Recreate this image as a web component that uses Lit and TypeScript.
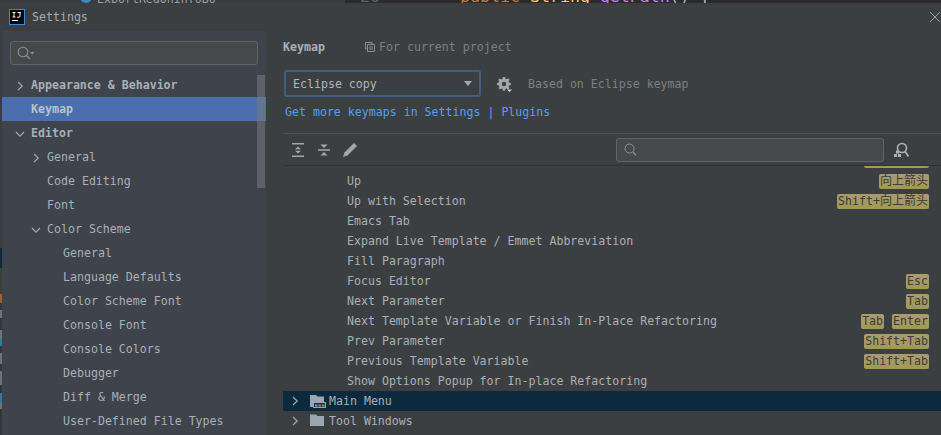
import { LitElement, html, css, svg } from "lit";
import { customElement } from "lit/decorators.js";

const chevronRight = svg`<svg width="10" height="10" viewBox="0 0 10 10"><path d="M3 1l4.2 4L3 9" fill="none" stroke="#a4a7aa" stroke-width="1.2"/></svg>`;
const chevronDown = svg`<svg width="10" height="10" viewBox="0 0 10 10"><path d="M1 3l4 4.2L9 3" fill="none" stroke="#a4a7aa" stroke-width="1.2"/></svg>`;

const navItems = [
  { label: "Appearance & Behavior", depth: 0, bold: true, arrow: "right" },
  { label: "Keymap", depth: 0, bold: true, selected: true },
  { label: "Editor", depth: 0, bold: true, arrow: "down" },
  { label: "General", depth: 1, arrow: "right" },
  { label: "Code Editing", depth: 1 },
  { label: "Font", depth: 1 },
  { label: "Color Scheme", depth: 1, arrow: "down" },
  { label: "General", depth: 2 },
  { label: "Language Defaults", depth: 2 },
  { label: "Color Scheme Font", depth: 2 },
  { label: "Console Font", depth: 2 },
  { label: "Console Colors", depth: 2 },
  { label: "Debugger", depth: 2 },
  { label: "Diff & Merge", depth: 2 },
  { label: "User-Defined File Types", depth: 2 },
];

const actions: { label: string; keys?: string[] }[] = [
  { label: "Up", keys: ["向上箭头"] },
  { label: "Up with Selection", keys: ["Shift+向上箭头"] },
  { label: "Emacs Tab" },
  { label: "Expand Live Template / Emmet Abbreviation" },
  { label: "Fill Paragraph" },
  { label: "Focus Editor", keys: ["Esc"] },
  { label: "Next Parameter", keys: ["Tab"] },
  { label: "Next Template Variable or Finish In-Place Refactoring", keys: ["Tab", "Enter"] },
  { label: "Prev Parameter", keys: ["Shift+Tab"] },
  { label: "Previous Template Variable", keys: ["Shift+Tab"] },
  { label: "Show Options Popup for In-place Refactoring" },
];

@customElement("app-root")
export class AppRoot extends LitElement {
  static styles = css`
    :host {
      display: block;
      width: 941px;
      height: 435px;
      overflow: hidden;
      background: #3c3f41;
      font-family: "DejaVu Sans Mono", "Noto Sans CJK SC", monospace;
      font-size: 11.6px;
      color: #a9b0b6;
    }
    .backdrop {
      height: 3px;
      overflow: hidden;
      display: flex;
      white-space: pre;
    }
    .tabs {
      width: 345px;
      background: #393b3d;
      display: flex;
      padding-left: 80px;
      box-sizing: border-box;
      gap: 5px;
      line-height: 16px;
      color: #9aa0a4;
    }
    .tab-icon {
      width: 12px;
      height: 12px;
      flex: none;
      margin-top: -9px;
      border-radius: 50%;
      background: #3d87c0;
    }
    .tab-name {
      margin-top: -9px;
    }
    .editor {
      flex: 1;
      background: #2b2b2b;
      font-size: 16.6px;
      line-height: 20px;
      display: flex;
    }
    .editor span {
      margin-top: -13px;
    }
    .gutter {
      width: 115px;
      color: #606366;
      padding-left: 5px;
      box-sizing: border-box;
    }
    .kw {
      color: #cc7832;
    }
    .type {
      color: #ffc66d;
    }
    .fn {
      color: #c77dff;
    }
    .plain {
      color: #a9b7c6;
    }
    .titlebar {
      height: 28px;
      display: flex;
      align-items: center;
      padding-left: 9px;
      gap: 7px;
      position: relative;
      color: #a4abb0;
    }
    .logo {
      width: 16px;
      height: 16px;
      box-sizing: border-box;
      background: #000;
      border: 1px solid #2f8fe8;
      display: block;
    }
    .close {
      position: absolute;
      right: 1px;
      top: 9px;
    }
    .body {
      display: flex;
      height: 404px;
    }
    .edge {
      width: 2px;
      flex: none;
      background: linear-gradient(
        #3a3d3f 0 217px,
        #3f4238 217px 217px,
        #0d293e 217px 237px,
        #3c3f38 237px 263px,
        #b5532a 263px 272px,
        #33363a 272px 279px,
        #6f7378 279px 287px,
        #33363a 287px 299px,
        #6f7378 299px 307px,
        #2e7d9a 308px 315px,
        #33363a 315px 322px,
        #6f7378 322px 333px,
        #33363a 333px 340px,
        #6f7378 340px 354px,
        #33363a 354px 362px,
        #2e7d9a 362px 372px,
        #6f7378 372px 378px,
        #33363a 378px
      );
    }
    .nav {
      width: 264px;
      flex: none;
      background: #3e434c;
      position: relative;
      padding-top: 10px;
      box-sizing: border-box;
    }
    .nav-search {
      margin: 0 8px 8px;
      height: 24px;
      box-sizing: border-box;
      background: #45494a;
      border: 1px solid #646464;
      border-radius: 3px;
      display: flex;
      align-items: center;
      padding-left: 5px;
    }
    .nav-row {
      height: 24px;
      display: flex;
      align-items: center;
      position: relative;
      white-space: nowrap;
    }
    .nav-row.sel {
      background: #4b6eaf;
      color: #b9c2cc;
    }
    .nav-row b {
      font-weight: bold;
    }
    .chev {
      position: absolute;
      top: 7px;
      display: block;
      height: 10px;
    }
    .scroll {
      position: absolute;
      right: 1px;
      top: 44px;
      width: 8px;
      height: 113px;
      background: rgba(120, 124, 128, 0.55);
    }
    .main {
      flex: 1;
      min-width: 0;
      padding-top: 5px;
    }
    .heading {
      display: flex;
      align-items: center;
      height: 22px;
      padding-left: 17px;
    }
    .heading b {
      width: 82px;
    }
    .muted {
      color: #7b7f82;
    }
    .project {
      display: flex;
      align-items: center;
      gap: 4px;
    }
    .scheme {
      display: flex;
      align-items: center;
      margin: 12px 0 0 18px;
      height: 27px;
    }
    .combo {
      width: 197px;
      height: 27px;
      box-sizing: border-box;
      border: 2px solid #3d6185;
      border-radius: 3px;
      background: #3c3f41;
      display: flex;
      align-items: center;
      justify-content: space-between;
      padding: 0 7px;
      color: #b0b6ba;
    }
    .caret {
      width: 0;
      height: 0;
      border-left: 4.5px solid transparent;
      border-right: 4.5px solid transparent;
      border-top: 5px solid #a4a7aa;
    }
    .gear {
      margin: 2px 15px 0 16px;
      display: block;
    }
    .link {
      margin: 6px 0 0 19px;
      height: 18px;
      line-height: 18px;
      color: #589df6;
    }
    .toolbar {
      margin: 12px 0 0 17px;
      height: 33px;
      box-sizing: border-box;
      border-top: 1px solid #515151;
      border-bottom: 1px solid #323232;
      display: flex;
      align-items: center;
      padding-left: 8px;
      gap: 12px;
    }
    .toolbar svg {
      display: block;
    }
    .tool-search {
      margin-left: auto;
      margin-right: -2px;
      width: 268px;
      height: 24px;
      box-sizing: border-box;
      background: #45494a;
      border: 1px solid #646464;
      border-radius: 3px;
      display: flex;
      align-items: center;
      padding-left: 7px;
    }
    .tool-find {
      margin-right: 32px;
    }
    .tree {
      margin-left: 17px;
      padding-top: 5px;
      position: relative;
    }
    .clipped {
      position: absolute;
      top: 0;
      right: 12px;
      width: 65px;
      height: 2px;
      background: #a39b55;
      border-radius: 0 0 2px 2px;
    }
    .action {
      height: 20px;
      display: flex;
      align-items: center;
      justify-content: space-between;
      padding: 0 12px 0 64px;
      white-space: nowrap;
    }
    .keys {
      display: flex;
      gap: 8px;
    }
    .key {
      height: 15px;
      line-height: 15px;
      padding: 0 1px;
      border-radius: 2px;
      color: #3c3c38;
      background: linear-gradient(#ab9a72, #a09a52);
    }
    .cjk {
      font-size: 12px;
    }
    .group {
      height: 20px;
      display: flex;
      align-items: center;
      padding-left: 7px;
      white-space: nowrap;
    }
    .group.active {
      background: #0d293e;
    }
    .group svg {
      display: block;
    }
    .folder {
      margin: 0 3px 0 10px;
    }
  `;

  renderNavRow(item: (typeof navItems)[number]) {
    const left = 29 + item.depth * 16;
    return html`<div class="nav-row ${item.selected ? "sel" : ""}" style="padding-left:${left}px">
      ${item.arrow
        ? html`<span class="chev" style="left:${left - 16}px">${item.arrow === "right" ? chevronRight : chevronDown}</span>`
        : ""}
      ${item.bold ? html`<b>${item.label}</b>` : item.label}
    </div>`;
  }

  // chinese key names are a touch wider than the latin ones
  renderKey(k: string) {
    const m = k.match(/^([\x00-\x7f]*)(.*)$/)!;
    return html`<span class="key">${m[1]}${m[2] ? html`<span class="cjk">${m[2]}</span>` : ""}</span>`;
  }

  render() {
    return html`
      <div class="backdrop">
        <div class="tabs">
          <span class="tab-icon"></span>
          <span class="tab-name">ExportReqOnInfoBo</span>
        </div>
        <div class="editor">
          <span class="gutter"> 26</span>
          <span class="kw">public </span>
          <span class="type">String </span>
          <span class="fn">getPath</span>
          <span class="plain">() {</span>
        </div>
      </div>
      <div class="titlebar">
        <svg class="logo" viewBox="0 0 14 14">
          <rect x="2" y="10" width="6" height="1" fill="#fff" />
          <path d="M2.500 2.500h3M4 2.500v4.500M2.500 7h3M7.500 2.500h3.500M10 2.500v3.700q0 1-1 1H7" fill="none" stroke="#fff" stroke-width="1" />
        </svg>
        <span>Settings</span>
        <svg class="close" width="10" height="10" viewBox="0 0 10 10">
          <path d="M0 0l10 10M10 0L0 10" stroke="#9a9d9f" stroke-width="1" />
        </svg>
      </div>
      <div class="body">
        <div class="edge"></div>
        <div class="nav">
          <div class="nav-search">
            <svg width="22" height="16" viewBox="0 0 22 16">
              <circle cx="7" cy="7" r="4.800" fill="none" stroke="#8d9093" stroke-width="1.100" />
              <path d="M10.500 10.500l3.500 3.500" stroke="#8d9093" stroke-width="1.200" />
              <path d="M14 7h4.500l-2.200 2.400z" fill="#8d9093" />
            </svg>
          </div>
          ${navItems.map((i) => this.renderNavRow(i))}
          <div class="scroll"></div>
        </div>
        <div class="main">
          <div class="heading">
            <b>Keymap</b>
            <span class="project muted">
              <svg width="10" height="10" viewBox="0 0 10 10">
                <path d="M.5.5h6.500v2M.5.5v6.500h2M2.500 2.500h7v7h-7zM4 5h4M4 7h4" fill="none" stroke="#8b8e90" />
              </svg>
              For current project
            </span>
          </div>
          <div class="scheme">
            <div class="combo"><span>Eclipse copy</span><span class="caret"></span></div>
            <svg class="gear" width="16" height="16" viewBox="1 1 16 16">
              <path d="M7 1h2l.4 1.700 1.200.5 1.500-.9 1.400 1.400-.9 1.500.5 1.200L14.800 7v2l-1.700.4-.5 1.200.9 1.500-1.400 1.400-1.500-.9-1.200.5L9 14.800H7l-.4-1.700-1.200-.5-1.500.9-1.400-1.400.9-1.500-.5-1.200L1 9V7l1.700-.4.5-1.200-.9-1.500 1.400-1.400 1.500.9 1.200-.5z" fill="#a4a7aa" />
              <circle cx="8" cy="8" r="2.200" fill="#3c3f41" />
              <path d="M11 13.500h5l-2.500 2.500z" fill="#d0d0d0" />
            </svg>
            <span class="muted">Based on Eclipse keymap</span>
          </div>
          <div class="link">Get more keymaps in Settings | Plugins</div>
          <div class="toolbar">
            <svg width="14" height="14" viewBox="0 0 14 14">
              <path d="M1 0h12v1.500H1zM1 12.500h12V14H1zM7 3.500L10 6.300H4zM7 10.500L4 7.700h6z" fill="#a4a7aa" />
            </svg>
            <svg width="14" height="14" viewBox="0 0 14 14">
              <path d="M1 6.200h12v1.600H1zM3.500 1.500h7L7 5zM7 9l3.500 3.500h-7z" fill="#a4a7aa" />
            </svg>
            <svg width="14" height="14" viewBox="0 0 14 14">
              <path d="M11 0l3 3-9.500 9.500L0 14l1.500-4.500z" fill="#a4a7aa" />
            </svg>
            <div class="tool-search">
              <svg width="13" height="14" viewBox="0 0 13 14">
                <circle cx="5.500" cy="5.500" r="4.500" fill="none" stroke="#8d9093" />
                <path d="M9 9l3 3.500" stroke="#8d9093" stroke-width="1.200" />
              </svg>
            </div>
            <svg class="tool-find" width="15" height="16" viewBox="0 0 15 16">
              <circle cx="8" cy="6" r="4.500" fill="none" stroke="#b0b3b5" stroke-width="1.600" />
              <path d="M11 9.500l3.500 5" stroke="#b0b3b5" stroke-width="1.800" />
              <path d="M0 12h3v3H0zM4 12h3v3H4zM2 8.500h3v3H2z" fill="#b0b3b5" />
            </svg>
          </div>
          <div class="tree">
            <div class="clipped"></div>
            ${actions.map(
              (a) => html`<div class="action">
                <span>${a.label}</span>
                ${a.keys ? html`<span class="keys">${a.keys.map((k) => this.renderKey(k))}</span>` : ""}
              </div>`
            )}
            <div class="group active">
              ${chevronRight}
              <svg class="folder" width="16" height="14" viewBox="0 0 16 14">
                <path d="M0 1h6l1.500 1.500H14V8H3v5H0z" fill="#9aa7b0" />
                <rect x="3.500" y="8.500" width="12" height="5" fill="#26323a" stroke="#9aa7b0" />
                <path d="M5 10.500h2.500v2H5z" fill="#5aa0e0" />
                <path d="M8.500 10.500H11v2H8.500z" fill="#e06060" />
                <path d="M12 10.500h2.500v2H12z" fill="#62b543" />
              </svg>
              Main Menu
            </div>
            <div class="group">
              ${chevronRight}
              <svg class="folder" width="16" height="14" viewBox="0 0 16 14">
                <path d="M0 .5h6L7.500 2H14v10H0z" fill="#9aa7b0" />
              </svg>
              Tool Windows
            </div>
          </div>
        </div>
      </div>
    `;
  }
}
